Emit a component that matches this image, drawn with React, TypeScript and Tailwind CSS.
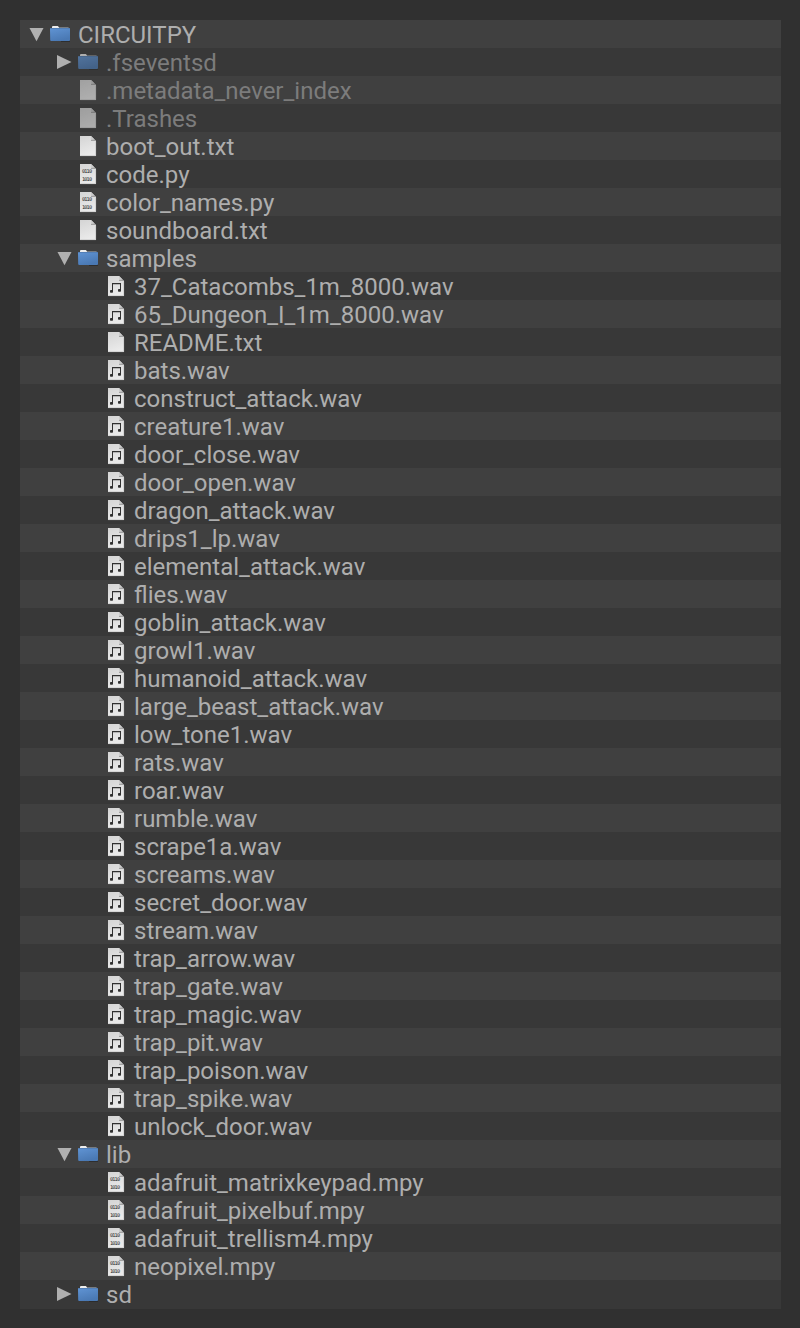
type Kind = "folder" | "text" | "code" | "audio";
type Entry = { name: string; kind: Kind; depth: 0 | 1 | 2; open?: boolean; hidden?: boolean };

const audio = (name: string): Entry => ({ name: name + ".wav", kind: "audio", depth: 2 });
const lib = (name: string): Entry => ({ name: name + ".mpy", kind: "code", depth: 2 });

const entries: Entry[] = [
  { name: "CIRCUITPY", kind: "folder", depth: 0, open: true },
  { name: ".fseventsd", kind: "folder", depth: 1, hidden: true },
  { name: ".metadata_never_index", kind: "text", depth: 1, hidden: true },
  { name: ".Trashes", kind: "text", depth: 1, hidden: true },
  { name: "boot_out.txt", kind: "text", depth: 1 },
  { name: "code.py", kind: "code", depth: 1 },
  { name: "color_names.py", kind: "code", depth: 1 },
  { name: "soundboard.txt", kind: "text", depth: 1 },
  { name: "samples", kind: "folder", depth: 1, open: true },
  audio("37_Catacombs_1m_8000"),
  audio("65_Dungeon_I_1m_8000"),
  { name: "README.txt", kind: "text", depth: 2 },
  ...[
    "bats", "construct_attack", "creature1", "door_close", "door_open", "dragon_attack",
    "drips1_lp", "elemental_attack", "flies", "goblin_attack", "growl1", "humanoid_attack",
    "large_beast_attack", "low_tone1", "rats", "roar", "rumble", "scrape1a", "screams",
    "secret_door", "stream", "trap_arrow", "trap_gate", "trap_magic", "trap_pit",
    "trap_poison", "trap_spike", "unlock_door",
  ].map(audio),
  { name: "lib", kind: "folder", depth: 1, open: true },
  ...["adafruit_matrixkeypad", "adafruit_pixelbuf", "adafruit_trellism4", "neopixel"].map(lib),
  { name: "sd", kind: "folder", depth: 1 },
];

const indent = { 0: "pl-1.5", 1: "pl-[34px]", 2: "pl-[62px]" };

function Arrow({ open }: { open?: boolean }) {
  return (
    <svg className="h-7 w-5 shrink-0" viewBox="0 0 20 28" fill="#b0b0b0">
      {open ? <path d="M3.5 8H17.5L10.5 21.2Z" /> : <path d="M3 7L17.5 14L3 21Z" />}
    </svg>
  );
}

function FolderIcon() {
  return (
    <svg className="h-7 w-6 shrink-0" viewBox="0 0 24 28">
      <path d="M15 21.3H24" stroke="#252525" strokeWidth="0.8" />
      <path d="M6 9V7H22.6V9Z" fill="#777b80" />
      <path d="M6 8.5V6.8Q6 6 7 6H11.8L13 7.2V8.5Z" fill="#eeeeee" />
      <path d="M4 9Q4 8 5 8H23Q24 8 24 9V20Q24 21 23 21H5.2Q4.2 21 4.2 20Z" fill="url(#folder-blue)" />
      <path d="M4.5 8.5H23.5" fill="none" stroke="#527fb8" strokeWidth="1" />
    </svg>
  );
}

function FileIcon({ kind }: { kind: Kind }) {
  return (
    <svg className="h-7 w-6 shrink-0" viewBox="0 0 24 28">
      <path d="M6 4H17L22 9V24H6Z" fill="url(#paper)" />
      <path d="M17 4V9H22Z" fill="#a2a2a2" />
      <path d="M17 4L20.5 7.5L17 8Z" fill="#cccccc" />
      <path d="M6.2 23.7H21.7V9.5" fill="none" stroke="#b8b8b8" strokeWidth="0.5" />
      {kind === "code" && (
        <g fontFamily="DejaVu Sans Mono, monospace" fontSize="5.2" fill="#222222">
          <text x="8" y="12.9" textLength="10" lengthAdjust="spacing">0110</text>
          <text x="8" y="20.9" textLength="10" lengthAdjust="spacing">1010</text>
        </g>
      )}
      {kind === "audio" && (
        <g fill="#303030">
          <path d="M10 11H19V19H18V12.2H11V20H10Z" />
          <rect x="8" y="18" width="3" height="2.8" rx="0.7" />
          <rect x="16" y="17" width="3" height="2.8" rx="0.7" />
        </g>
      )}
    </svg>
  );
}

function Row({ entry }: { entry: Entry }) {
  const { name, kind, depth, open, hidden } = entry;
  return (
    <li className={"flex h-7 items-center odd:bg-[#404040] even:bg-[#383838] " + indent[depth]}>
      {kind === "folder" ? <Arrow open={open} /> : <span className="w-5 shrink-0" />}
      <span className={"flex h-7 items-center " + (hidden ? "opacity-65" : "")}>
        {kind === "folder" ? <FolderIcon /> : <FileIcon kind={kind} />}
      </span>
      <span
        className={
          "pt-0.5 pl-2 text-[24px] leading-7 whitespace-pre " +
          (hidden ? "text-[#7c7c7c]" : "text-[#aeaeae]")
        }
      >
        {name}
      </span>
    </li>
  );
}

export default function App() {
  return (
    <main className="h-[1328px] w-[800px] bg-[#303030] pt-5 pl-5 font-['Roboto',sans-serif]">
      <svg className="absolute size-0">
        <defs>
          <linearGradient id="folder-blue" x1="0" y1="0" x2="0.4" y2="1">
            <stop offset="0" stopColor="#6094d4" />
            <stop offset="1" stopColor="#4a79b4" />
          </linearGradient>
          <linearGradient id="paper" x1="0" y1="0" x2="0.3" y2="1">
            <stop offset="0" stopColor="#d4d4d4" />
            <stop offset="1" stopColor="#eaeaea" />
          </linearGradient>
        </defs>
      </svg>
      <ul className="w-[761px] bg-[#383838] pb-px">
        {entries.map((entry) => (
          <Row key={entry.name} entry={entry} />
        ))}
      </ul>
    </main>
  );
}
